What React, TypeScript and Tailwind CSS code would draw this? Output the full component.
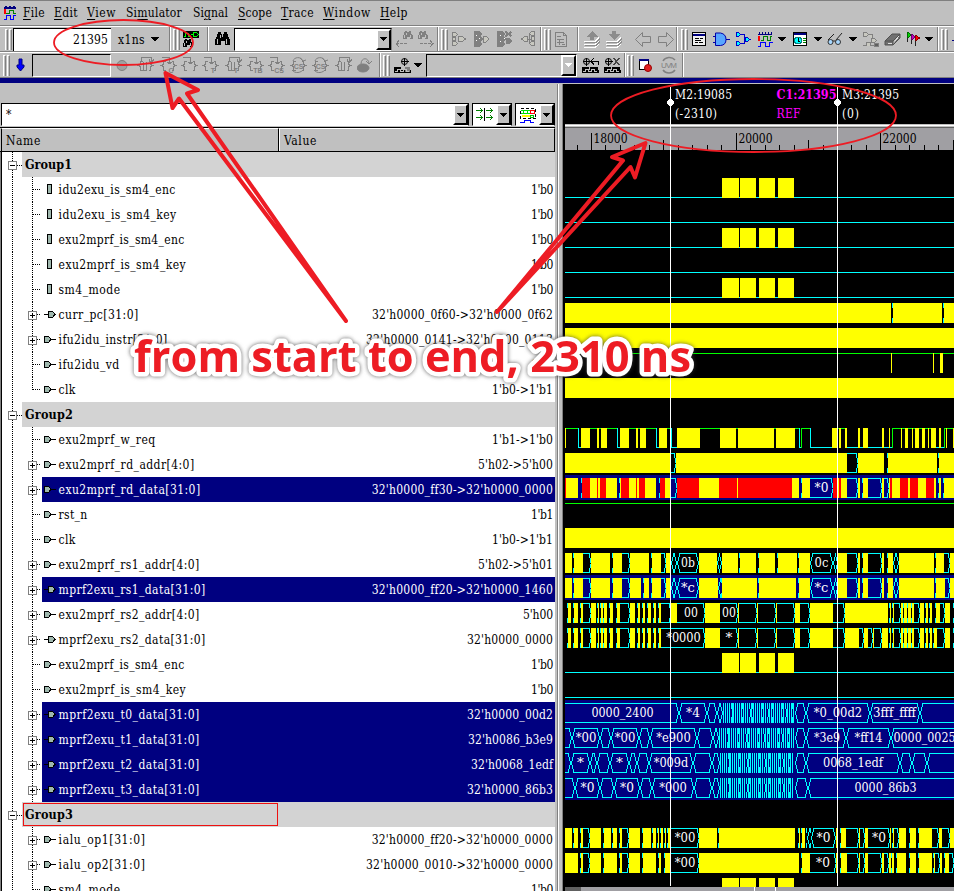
import { useLayoutEffect, useRef, type ReactNode } from "react";
import clsx from "clsx";

const SERIF = "font-['DejaVu_Serif_Condensed','DejaVu_Serif',serif]";

/* Text that spreads its letters so that it fills a fixed width. */
function Fit({ w, children, className }: { w: number; children: string; className?: string }) {
  const ref = useRef<HTMLSpanElement>(null);
  useLayoutEffect(() => {
    const el = ref.current;
    if (!el) return;
    el.style.letterSpacing = "0px";
    const natural = el.getBoundingClientRect().width;
    el.style.letterSpacing = `${(w - natural) / children.length}px`;
  }, [w, children]);
  return (
    <span ref={ref} className={clsx("inline-block whitespace-pre", className)}>
      {children}
    </span>
  );
}

/* ---------- menu bar ---------- */
const menus: [string, number, number, number][] = [
  ["File", 0, 22, 9],
  ["Edit", 0, 24, 9],
  ["View", 0, 29, 10],
  ["Simulator", 2, 56, 11],
  ["Signal", 2, 35, 10],
  ["Scope", 0, 34, 9],
  ["Trace", 0, 33, 9],
  ["Window", 0, 48, 9],
  ["Help", 0, 28, 0],
];

function MenuItem({ text, u, w, gap }: { text: string; u: number; w: number; gap: number }) {
  const ref = useRef<HTMLSpanElement>(null);
  useLayoutEffect(() => {
    const el = ref.current;
    if (!el) return;
    el.style.letterSpacing = "0px";
    el.style.letterSpacing = `${(w - el.getBoundingClientRect().width) / text.length}px`;
  }, [w, text]);
  return (
    <span ref={ref} className="inline-block whitespace-pre" style={{ marginRight: gap }}>
      {text.slice(0, u)}
      <span className="underline underline-offset-2">{text[u]}</span>
      {text.slice(u + 1)}
    </span>
  );
}

/* ---------- toolbar parts ---------- */
function Handle({ className }: { className: string }) {
  return (
    <div className={clsx("flex h-[21px] shrink-0 gap-px", className)}>
      <div className="w-[3px] border-l border-t border-white border-r border-r-[#808080]" />
      <div className="w-[3px] border-l border-t border-white border-r border-r-[#808080]" />
    </div>
  );
}
function Sep({ className }: { className?: string }) {
  return <div className={clsx("h-[25px] w-[2px] shrink-0 border-l border-r border-l-[#808080] border-r-white", className)} />;
}
function Tri({ className, fill = "#000" }: { className: string; fill?: string }) {
  return (
    <svg className={clsx("h-[6px] shrink-0", className)} width="8" height="6" viewBox="0 0 8 6" shapeRendering="crispEdges">
      <path d="M0 1h8L4 5.5z" fill={fill} />
    </svg>
  );
}
function Ic({ className, children, w = 17 }: { className: string; children: ReactNode; w?: number }) {
  return (
    <svg className={clsx("shrink-0", className)} width={w} height="18" viewBox={`0 0 ${w} 18`} fill="none" stroke="#808080" shapeRendering="crispEdges">
      {children}
    </svg>
  );
}
function DropButton({ fill }: { fill?: string }) {
  return (
    <div className="flex w-[15px] shrink-0 items-center justify-center border-2 border-b-black border-l-white border-r-black border-t-white bg-[#c0c0c0]">
      <Tri className="w-[7px]" fill={fill} />
    </div>
  );
}
function Binoculars({ x = 0, y = 0, s = 1, c = "#000" }: { x?: number; y?: number; s?: number; c?: string }) {
  return (
    <g transform={`translate(${x} ${y}) scale(${s})`} fill={c} stroke="none">
      <path d="M3 1h3v2h1v3h1V3h1V1h3v2h1v3h1v2h1v6h-5v-4H6v4H0V8h1V6h1V3h1z" />
      <path d="M2 8h1v5H2zM11 8h1v5h-1zM5 4h1v3H5z" fill="#c0c0c0" />
    </g>
  );
}

function Brace({ className, tag, kind = 0 }: { className: string; tag?: string; kind?: number }) {
  return (
    <Ic className={className}>
      <path d="M5.500 5.500h-2v3l-2 1 2 1v4h2M11.500 5.500h2v3l2 1-2 1v4h-2" />
      {kind === 0 && <path d="M4.500 5V1.500h10V6M12 3.500l2.500 3 2.500-3M6.500 6v8h3V6" />}
      {kind === 1 && <path d="M2 1.500h7.500V8M7 6.500h5M8 7.500h3" />}
      {kind === 2 && <path d="M3 5C4 1 11 0 13 5M10 2l3 3 3-1M2 14c3 4 9 3 12-1" shapeRendering="auto" />}
      {tag && (
        <text x={kind === 2 ? 8.5 : 11} y={kind === 2 ? 12.5 : 17} fontSize="7" fontWeight="bold" fill="#808080" stroke="none" textAnchor="middle" className="font-['Liberation_Sans',sans-serif]">
          {tag}
        </text>
      )}
    </Ic>
  );
}

function WaveIcon({ className }: { className: string }) {
  return (
    <Ic className={className} w={15}>
      <path d="M0 4.500h14M1.500 2v2M4.500 2v2M7.500 2v2M10.500 2v2M13.500 2v2" stroke="#000080" />
      <path d="M1 6v5" stroke="#f00" strokeWidth="2" />
      <path d="M3 10.500h2.500v-4h4v4h2.500v-4h2" stroke="#008000" />
      <path d="M0 16.500h2.500v-4h5v4h4v-4h3" stroke="#00f" />
    </Ic>
  );
}

function Gates({ className, c = "#808080", kind }: { className: string; c?: string; kind: number }) {
  return (
    <Ic className={className}>
      {kind === 0 && (
        <g stroke={c} fill="#c8c8c0">
          <path d="M1.500 2.500h3l2 2-2 2h-3zM1.500 11.500h3l2 2-2 2h-3zM7.500 6.500h4l3 2.500-3 2.500h-4z" />
          <path d="M1.500 7.500h3v3h-3z" />
        </g>
      )}
      {kind === 1 && (
        <g stroke="none" fill={c}>
          <path d="M0 1h5l3 3-1 3 2 2-2 2 1 3-3 3H0z" />
          <path d="M9 6h3l3 3-3 3H9z" fill="#c8c8c0" stroke={c} />
          <path d="M2 5h1v1H2zM2 10h1v1H2zM5 8h1v1H5z" fill="#fff" />
        </g>
      )}
      {kind === 2 && (
        <g stroke="none" fill={c}>
          <path d="M0 1h5l3 3-1 3 2 2-2 2 1 3-3 3H0z" />
          <path d="M9 8h3l3 3-3 3H9z" />
          <path d="M8.500 1.500l6 5M14.500 1.500l-6 5" stroke={c} strokeWidth="2" />
          <path d="M3 5h1v1H3zM3 11h1v1H3zM7 8h1v1H7z" fill="#fff" />
        </g>
      )}
      {kind === 3 && (
        <g stroke={c} fill="#c8c8c0">
          <path d="M7.500 6.500h-3l-3 2.500 3 2.500h3zM14.500 1.500h-3l-2 2 2 2h3zM14.500 6.500h-3v4h3zM14.500 11.500h-3l-2 2 2 2h3zM7 9h4M9 4v10" />
        </g>
      )}
    </Ic>
  );
}

function Layers({ className, up }: { className: string; up?: boolean }) {
  return (
    <Ic className={className}>
      <path d="M0 11.500h11l4-4M0 14.500h11l4-4M0 17.500h11l4-4" stroke="#fff" />
      <path d="M1 12.500h11l4-4M1 15.500h11l4-4" stroke="#909090" />
      <path d={up ? "M8 1l6 6h-4v3H6V7H2z" : "M8 10l6-6h-4V1H6v3H2z"} fill="#8c8c8c" stroke="none" />
    </Ic>
  );
}

function Probe({ className, kind }: { className: string; kind: number }) {
  return (
    <Ic className={className}>
      <circle cx={kind ? 4.5 : 10.5} cy="5.500" r="3" stroke="#000" shapeRendering="auto" />
      <path d={kind ? "M1 5.500h8M4.500 2v8" : "M7 5.500h8M10.500 2v8"} stroke="#000" />
      <path d="M0 11h7v3h10v3H0z" fill="#000" stroke="none" />
      {kind === 0 ? <path d="M11 11h5v5h-5z" fill="#808080" stroke="none" /> : <path d="M8 11h8v3H8z" fill="#000" stroke="none" />}
      <path d="M1 15.500h2v-2h3v2h3v-2h3v2h3" stroke="#c0c0c0" />
      {kind === 1 && <path d="M9 5.500h7v3M12 2l-3 3.500 3 3" stroke="#000" />}
      {kind === 2 && <path d="M9.500 2l6 7M15.500 2l-6 7" stroke="#444" strokeWidth="1.500" />}
    </Ic>
  );
}

/* ---------- signal list ---------- */
type Row = {
  n: string;
  w: number;
  v?: string;
  vw?: number;
  group?: boolean;
  plus?: boolean;
  icon?: "net" | "in" | "out";
  sel?: boolean;
  last?: boolean;
  focus?: boolean;
};

const rows: Row[] = [
  { n: "Group1", w: 47, group: true },
  { n: "idu2exu_is_sm4_enc", w: 117, v: "1'b0", vw: 22, icon: "net" },
  { n: "idu2exu_is_sm4_key", w: 118, v: "1'b0", vw: 22, icon: "net" },
  { n: "exu2mprf_is_sm4_enc", w: 126, v: "1'b0", vw: 22, icon: "net" },
  { n: "exu2mprf_is_sm4_key", w: 127.5, v: "1'b0", vw: 22, icon: "net" },
  { n: "sm4_mode", w: 62, v: "1'b0", vw: 22, icon: "net" },
  { n: "curr_pc[31:0]", w: 80, v: "32'h0000_0f60->32'h0000_0f62", vw: 181, icon: "out", plus: true },
  { n: "ifu2idu_instr[31:0]", w: 109, v: "32'h0000_0141->32'h0300_0113", vw: 187, icon: "in", plus: true },
  { n: "ifu2idu_vd", w: 61, v: "1'b1", vw: 22, icon: "in" },
  { n: "clk", w: 17, v: "1'b0->1'b1", vw: 61, icon: "in", last: true },
  { n: "Group2", w: 48, group: true },
  { n: "exu2mprf_w_req", w: 97, v: "1'b1->1'b0", vw: 61, icon: "in" },
  { n: "exu2mprf_rd_addr[4:0]", w: 136, v: "5'h02->5'h00", vw: 75, icon: "in", plus: true },
  { n: "exu2mprf_rd_data[31:0]", w: 142, v: "32'h0000_ff30->32'h0000_0000", vw: 181, icon: "in", plus: true, sel: true },
  { n: "rst_n", w: 29, v: "1'b1", vw: 22, icon: "in" },
  { n: "clk", w: 17, v: "1'b0->1'b1", vw: 61, icon: "in" },
  { n: "exu2mprf_rs1_addr[4:0]", w: 141, v: "5'h02->5'h01", vw: 75, icon: "in", plus: true },
  { n: "mprf2exu_rs1_data[31:0]", w: 147, v: "32'h0000_ff20->32'h0000_1460", vw: 181, icon: "out", plus: true, sel: true },
  { n: "exu2mprf_rs2_addr[4:0]", w: 141, v: "5'h00", vw: 30, icon: "in", plus: true },
  { n: "mprf2exu_rs2_data[31:0]", w: 147, v: "32'h0000_0000", vw: 86, icon: "out", plus: true },
  { n: "exu2mprf_is_sm4_enc", w: 126, v: "1'b0", vw: 22, icon: "in" },
  { n: "exu2mprf_is_sm4_key", w: 127.5, v: "1'b0", vw: 22, icon: "in" },
  { n: "mprf2exu_t0_data[31:0]", w: 141, v: "32'h0000_00d2", vw: 86, icon: "out", plus: true, sel: true },
  { n: "mprf2exu_t1_data[31:0]", w: 141, v: "32'h0086_b3e9", vw: 85, icon: "out", plus: true, sel: true },
  { n: "mprf2exu_t2_data[31:0]", w: 141, v: "32'h0068_1edf", vw: 82, icon: "out", plus: true, sel: true },
  { n: "mprf2exu_t3_data[31:0]", w: 141, v: "32'h0000_86b3", vw: 86, icon: "out", plus: true, sel: true },
  { n: "Group3", w: 48, group: true, focus: true },
  { n: "ialu_op1[31:0]", w: 87, v: "32'h0000_ff20->32'h0000_0000", vw: 181, icon: "in", plus: true },
  { n: "ialu_op2[31:0]", w: 87, v: "32'h0000_0010->32'h0000_0000", vw: 187, icon: "in", plus: true },
  { n: "sm4_mode", w: 62, v: "1'b0", vw: 22, icon: "in" },
];

function Tree({ row }: { row: Row }) {
  if (row.group)
    return (
      <svg width="20" height="25" viewBox="0 0 20 25" className="shrink-0" shapeRendering="crispEdges" fill="none" stroke="#000">
        <path d="M10.500 0v25M15 13.500h5" strokeDasharray="1 1" />
        <rect x="6.500" y="9.500" width="8" height="8" fill="#fff" stroke="#808080" />
        <path d="M8 13.500h5" />
      </svg>
    );
  return (
    <svg width="40" height="25" viewBox="0 0 40 25" className="shrink-0" shapeRendering="crispEdges" fill="none" stroke="#000">
      <path d={row.last ? "M10.500 0v25M30.500 0v13" : "M10.500 0v25M30.500 0v25"} strokeDasharray="1 1" />
      <path d="M31 12.500h8" strokeDasharray="1 1" />
      {row.plus && (
        <>
          <rect x="26.500" y="9.500" width="8" height="8" fill="#fff" stroke="#808080" />
          <path d="M28 13.500h5M30.500 11v5" />
        </>
      )}
    </svg>
  );
}

function Port({ kind }: { kind?: string }) {
  return (
    <svg width="16" height="25" viewBox="0 0 16 25" className="shrink-0" shapeRendering="crispEdges" fill="#9fb8ae" stroke="#000">
      {kind === "net" && <rect x="5.500" y="7.500" width="4" height="9" />}
      {kind === "in" && <path d="M2.500 9.500h4l2.500 3-2.500 3h-4zM9 12.500h5" />}
      {kind === "out" && <path d="M6.500 9.500h4l2.500 3-2.500 3h-4zM2 12.500h4" />}
    </svg>
  );
}

function SignalRow({ row }: { row: Row }) {
  return (
    <div className="flex h-[25px] shrink-0 leading-[27px]">
      <Tree row={row} />
      {row.group ? (
        <div className="flex min-w-0 flex-1 bg-[#d3d3d3] font-bold">
          <div className={clsx("mt-px flex h-[23px] w-[255px] border pl-px leading-[22px] ml-px", row.focus ? "border-[#ee1111]" : "border-transparent")}>
            <Fit w={row.w} className="text-[12.5px]">{row.n}</Fit>
          </div>
        </div>
      ) : (
        <div className={clsx("flex min-w-0 flex-1", row.sel && "bg-[#000080] text-white")}>
          <Port kind={row.icon} />
          <Fit w={row.w} className="ml-[0.6px]">{row.n}</Fit>
          <span className="flex-1" />
          <span className="pr-[2px]">
            <Fit w={row.vw ?? 22}>{row.v ?? ""}</Fit>
          </span>
        </div>
      )}
    </div>
  );
}

/* ---------- waveforms ----------
   Each token is a kind, a start (in thirds of a pixel from x = 560) and an
   optional label: y/r busy fill, b bus closed on the right, o bus closed on
   both sides, h high, l low, d dense transitions. */
const BLOCKS = "l15 y486 l537 y540 l588 y597 l645 y654 l702";
const waves: Record<number, string> = {
  1: BLOCKS,
  2: "l15",
  3: BLOCKS,
  4: "l15",
  5: BLOCKS,
  6: "y15 b993 y999 b1146 y1152",
  7: "y15",
  8: "h15 y993 h996 y1119 h1122 y1140 h1149",
  9: "y15",
  11: "y15 h18 l54 y63 h90 y111 h117 y123 h141 l171 y180 h207 y228 h234 y240 h258 l288 y297 h321 l333 y351 h420 y480 h528 y534 h642 y648 h705 l717 h723 l750 y816 h834 y837 h843 y855 l861 y894 l900 y909 l924 y966 l972 y987 l990 h996 y1023 h1026 y1035 h1044 y1056 h1059 y1065 h1077 y1086 h1095 y1104 h1107 y1113 l1128 y1137 l1143 h1152 y1158 h1161 y1179",
  12: "y15 b333 y348 b861 y894 b972 y984 b1131 y1137",
  13: "r15 y18 b54 r66 y90 r111 y114 r120 y138 b171 y180 r183 y207 r228 y231 r237 y255 b288 r300 y315 b333 r351 y417 r477 y531 r534 y696 b717 y726 b750:*0 r819 y834 r837 y843 b861 y894 b900 y909 b924 y966 b972 y987 r990 y996 r1020 y1044 r1050 y1074 r1098 y1122 b1128 y1137 b1143 y1152",
  14: "h15",
  15: "y15",
  16: "y15 b36 y42 b69 y93 b150 y159 b186 y210 b267 y276 b303 y318 o333 o351:0b y417 o472 y486 b534 y540 b588 y597 b645 y654 b711 y717 o750:0c o818 y834 b861 y894 b900 y909 b924 y966 b972 y984 o1000 y1017 b1122 y1128 b1152 y1170",
  17: "y15 b36 y42 b69 y93 b150 y159 b186 y210 b243 y252 b267 y276 b303 y318 o333 o351:*c y417 o474 y486 b591 y597 b708 y717 o750:*c o818 y834 b861 y894 b900 y909 b924 y966 b972 y984 o1000 y1017 b1122 y1128 b1155 y1170",
  18: "b15 y24 b33 y42 b54 y63 b69 y93 b108 y114 b117 y123 b129 y132 b141 y150 b159 y171 b180 y210 b225 y234 b240 y249 b255 y264 b273 y282 b288 y297 b303 y333 b351:00 y435 b480:00 y534 b537 y591 b594 y648 b651 y705 b720 y750 b819 y855 b984 y990 b993 y999 b1002 y1023 b1029 y1032 b1041 y1044 b1053 y1056 b1062 y1080 b1092 y1098 b1104 y1110 b1116 y1128 b1140 y1155 b1170",
  19: "b15 y24 b33 y42 b54 y63 b69 y93 b108 y114 b117 y123 b129 y132 b141 y150 b159 y171 b180 y210 b225 y234 b240 y249 b255 y264 b273 y282 b288 y297 b303:*0000 y435 b480:* y534 b537 y591 b594 y648 b651 y705 b720 y750 b819 y855 b897 y912 b924 y939 b942 y966 b984 y990 b993 y999 b1002 y1023 b1029 y1032 b1041 y1044 b1053 y1056 b1062 y1080 b1092 y1098 b1104 y1110 b1116 y1122 b1131 y1155 b1170",
  20: BLOCKS,
  21: "l15",
  22: "b15:0000_2400 o357:*4 o441 o472 d489 o705 o738:*0_00d2 o930:3fff_ffff o1080",
  23: "b15 o36:*00 o120 o153:*00 o237 o270:*e900 o411 o459 d477 o705 o738:*3e9 o858:*ff14 o993:0000_0025",
  24: "b15 o33:* o90 o111 o150:* o207 o231 o267:*009d o399 o456 d480 o705 o738:0068_1edf o1020 o1056 o1101",
  25: "b15 o45:*0 o120 o162:*0 o240 o276:*000 o402 o456 d480 o705 o744:0000_86b3",
  27: "y15 b36 y42 b54 y63 b69 y90 b123 y132 b153 y159 b171 y180 b186 y207 b240 y249 b273 y279 b288 y294 b297 y303 b309 y315 b318 y324 b333:*00 y417 b471 y477 b705 y717 b720 y726 b735 o741 o753:*0 y828 b834 y843 b858 y897 b900 y915 b924:*0 y990 b993 y999 b1002 y1017 b1038 y1050 b1068 y1077 b1116 y1137 b1146 y1170",
  28: "y15 b54 y63 b69 y90 b123 y132 b171 y180 b186 y207 b240 y249 b288 y297 b303 y315 b333:*00 y417 b717 y726 b750:*0 y828 b834 y843 b861 y897 b900 y915 b924 y966 b972 y987 b993 y996 b1002 y1011 b1038 y1050 b1068 y1077 b1116 y1122 b1125 y1140 b1146 y1155 b1167",
  29: BLOCKS,
};

const labelX: Record<string, number> = {
  "0000_2400": 622.5, "3fff_ffff": 894.5, "0000_0025": 924.5, "*3e9": 827, "*0000": 683.5,
  "0000_86b3": 885.5, "0068_1edf": 853,
};
const labelW: Record<string, number> = { "3fff_ffff": 43, "*ff14": 28, "*3e9": 26, "0068_1edf": 60 };

function Trace({ index, spec }: { index: number; spec: string }) {
  const top = 150 + index * 25;
  const t = top + 3;
  const b = t + 19;
  const selected = rows[index].sel;
  const bg = selected ? "#000080" : "#000";
  const tokens = spec.split(" ").map((s) => {
    const [head, label] = s.split(":");
    return { kind: head[0], x: 560 + Math.round(Number(head.slice(1)) / 3), label };
  });
  const cyan = "#00ffff";
  const isLong = index >= 22 && index <= 25;
  return (
    <g>
      {selected && <rect x="565" y={top} width="389" height="25" fill={bg} />}
      {tokens.map((k, i) => {
        const x = k.x;
        const e = i + 1 < tokens.length ? tokens[i + 1].x : isLong ? 970 : 954;
        const w = e - x;
        const prev = tokens[i - 1]?.kind;
        const next = tokens[i + 1]?.kind;
        switch (k.kind) {
          case "y":
          case "r":
            return <rect key={i} x={x} y={t} width={w} height="20" fill={k.kind === "y" ? "#ffff00" : "#ff0000"} />;
          case "h":
            return (
              <g key={i} fill="#00ff00">
                <rect x={x} y={t} width={w} height="1" />
                {prev === "l" && <rect x={x} y={t} width="1" height="20" />}
              </g>
            );
          case "l":
            return (
              <g key={i} fill={cyan}>
                <rect x={x} y={b} width={w} height="1" />
                {prev === "h" && <rect x={x} y={t} width="1" height="20" />}
              </g>
            );
          case "d":
            return (
              <g key={i} fill={cyan}>
                {Array.from({ length: Math.floor(w / 2) }, (_, j) => (
                  <g key={j}>
                    <rect x={x + j * 2} y={t} width={j % 5 === 4 ? 2 : 1} height="6" />
                    <rect x={x + j * 2 + (j % 9 === 4 ? 1 : 0)} y={t + 6} width="1" height="8" />
                    <rect x={x + j * 2} y={t + 14} width={j % 5 === 4 ? 2 : 1} height="6" />
                  </g>
                ))}
              </g>
            );
          case "b":
          case "o": {
            const l = k.kind === "o" ? 2 : 0;
            const wide = w > 4;
            const sloped = next === "o" || next === "d" || l > 0;
            return (
              <g key={i} fill={cyan}>
                <rect x={x} y={t} width={w} height="20" fill={bg} />
                {!wide && (
                  <>
                    <rect x={e - 1} y={t} width="1" height="5" />
                    <rect x={e - 1} y={t + 15} width="1" height="5" />
                  </>
                )}
                {wide && (
                  <>
                    <rect x={x + l} y={t} width={w - l - 2} height="1" />
                    <rect x={x + l} y={b} width={w - l - 2} height="1" />
                  </>
                )}
                {wide && sloped && (
                  <>
                    <rect x={e - 3} y={t} width="1" height="4" />
                    <rect x={e - 2} y={t + 4} width="1" height="4" />
                    <rect x={e - 1} y={t + 8} width="1" height="4" />
                    <rect x={e - 2} y={t + 12} width="1" height="4" />
                    <rect x={e - 3} y={t + 16} width="1" height="4" />
                  </>
                )}
                {wide && !sloped && (
                  <>
                    <rect x={e - 2} y={t} width="1" height="5" />
                    <rect x={e - 1} y={t + 5} width="1" height="5" />
                    <rect x={e - 1} y={t + 11} width="1" height="4" />
                    <rect x={e - 2} y={t + 15} width="1" height="5" />
                  </>
                )}
                {l > 0 && (
                  <>
                    <rect x={x + 2} y={t} width="1" height="4" />
                    <rect x={x + 1} y={t + 4} width="1" height="4" />
                    <rect x={x} y={t + 8} width="1" height="4" />
                    <rect x={x + 1} y={t + 12} width="1" height="4" />
                    <rect x={x + 2} y={t + 16} width="1" height="4" />
                  </>
                )}
              </g>
            );
          }
          default:
            return null;
        }
      })}
      {tokens.map((k, i) => {
        if (!k.label) return null;
        const e = i + 1 < tokens.length ? tokens[i + 1].x : 954;
        return (
          <text
            key={`t${i}`}
            x={labelX[k.label] ?? (k.x + e) / 2}
            y={top + 17}
            textAnchor="middle"
            textLength={labelW[k.label] ?? k.label.length * 6.9}
            lengthAdjust="spacingAndGlyphs"
            fill="#fff"
          >
            {k.label}
          </text>
        );
      })}
    </g>
  );
}

function WaveView() {
  const ticks = Array.from({ length: 28 }, (_, i) => i - 1);
  return (
    <svg width="389" height="807" viewBox="565 84 389 807" className={clsx("shrink-0 text-[12px]", SERIF)} shapeRendering="crispEdges">
      <rect x="565" y="84" width="389" height="807" fill="#000" />
      <rect x="565" y="124" width="389" height="1" fill="#c0c0c0" />
      <rect x="565" y="125" width="389" height="1" fill="#fff" />
      <rect x="565" y="126" width="389" height="1" fill="#c0c0c0" />
      <rect x="565" y="127" width="389" height="1" fill="#606060" />
      <rect x="565" y="128" width="389" height="22" fill="#a09fa3" />
      {ticks.map((i) => {
        const x = Math.round(591 + i * 14.47);
        const top = i % 10 === 0 ? 133 : i % 5 === 0 ? 140 : 145;
        return x < 954 ? <rect key={i} x={x} y={top} width="1" height={150 - top} fill="#000" /> : null;
      })}
      {([["18000", 593.5], ["20000", 738.5], ["22000", 882.5]] as [string, number][]).map(([s, x]) => (
        <text key={s} x={x} y="143" textLength="34" fill="#000">{s}</text>
      ))}
      {Object.entries(waves).map(([k, spec]) => (
        <Trace key={k} index={Number(k)} spec={spec} />
      ))}
      <rect x="565" y="887" width="389" height="4" fill="#a09fa3" />
      <rect x="565" y="887" width="16" height="4" fill="#606060" />
      <rect x="754" y="887" width="1" height="4" fill="#fff" />
      <rect x="775" y="887" width="1" height="4" fill="#fff" />
      {[670, 837].map((x) => (
        <g key={x} fill="#fff">
          <rect x={x} y="87" width="1" height="799" />
          <path d={`M${x - 1} 99h3v1h1v1h1v3h-1v1h-1v1h-3v-1h-1v-1h-1v-3h1v-1h1z`} />
        </g>
      ))}
      <g fill="#fff">
        <text x="675" y="99" textLength="57">M2:19085</text>
        <text x="675" y="118" textLength="42">(-2310)</text>
        <text x="842" y="99" textLength="57">M3:21395</text>
        <text x="842" y="118" textLength="17">(0)</text>
      </g>
      <g fill="#ff00ff">
        <text x="776.5" y="99" textLength="60" lengthAdjust="spacingAndGlyphs" fontWeight="bold">C1:21395</text>
        <text x="776.5" y="118" textLength="24">REF</text>
      </g>
    </svg>
  );
}

/* ---------- red notes over the window ---------- */
function Notes() {
  return (
    <svg className="pointer-events-none absolute left-0 top-0" width="954" height="891" viewBox="0 0 954 891" fill="none" stroke="#ed1c24">
      <ellipse cx="123.500" cy="42.500" rx="69.500" ry="22.500" strokeWidth="1.800" />
      <ellipse cx="753.500" cy="115.500" rx="142.500" ry="36.500" strokeWidth="1.800" />
      <path d="M346 321L179 98.500L172.500 108L165.500 73L198 90L187 93.500Z" strokeWidth="4" strokeLinejoin="round" />
      <path d="M497 312L623 160.500L612 157L645.500 143L635 177.500L630.500 167Z" strokeWidth="4" strokeLinejoin="round" />
      <g className="font-['Open_Sans','Noto_Sans',sans-serif] text-[43px] font-bold drop-shadow-[0_0_2px_rgba(60,60,60,0.8)]">
        <text x="134" y="372" textLength="557" lengthAdjust="spacingAndGlyphs" fill="#ed1c24" stroke="#fff" strokeWidth="9" strokeLinejoin="round" paintOrder="stroke">
          from start to end, 2310 ns
        </text>
      </g>
    </svg>
  );
}

function TopBar() {
  return (
    <div className="flex h-[26px] items-center border-b border-t border-[#808080] pl-[4px] leading-[26px]">
      <svg width="19" height="16" viewBox="0 0 19 16" className="shrink-0" fill="none" shapeRendering="crispEdges">
        <path d="M0 3h12M1.500 1v1M5.500 1v1M9.500 1v1" stroke="#000080" strokeWidth="2" />
        <path d="M1 4v5" stroke="#f00" strokeWidth="2" />
        <path d="M2 8.500h3v-3h4v3h3" stroke="#008000" strokeWidth="1" />
        <path d="M0 14.500h2v-4h4v4h3v-4h3" stroke="#0000ff" />
      </svg>
      {menus.map(([t, u, w, g]) => (
        <MenuItem key={t} text={t} u={u} w={w} gap={g} />
      ))}
    </div>
  );
}

function ToolbarOne() {
  return (
    <div className="flex h-[26px] items-center overflow-hidden border-b border-t border-b-[#808080] border-t-white pl-[5px]">
      <Handle className="mr-px w-[7px]" />
      <div className="h-[23px] w-[98px] shrink-0 border-l border-t border-black border-b-white border-r-white bg-white pr-[3px] text-right leading-[23px]">
        <Fit w={35}>21395</Fit>
      </div>
      <span className="ml-[7px] w-[33px] shrink-0 pt-px"><Fit w={27}>x1ns</Fit></span>
      <Tri className="mr-[10px] w-[8px]" />
      <Sep className="mr-[2px]" />
      <Handle className="mr-[3px] w-[7px]" />
      <Ic className="mr-[7px] w-[17px]">
        <rect x="0" y="1" width="16" height="7" fill="#000" stroke="none" />
        <path d="M1 6.500h1.500v-3h3v3h2M8 4.500h2M10.500 2.500h3l2 2-2 2h-3z" stroke="#00ff00" />
        <Binoculars x={0} y={8} s={0.65} />
      </Ic>
      <Sep className="mr-[6px]" />
      <Ic className="mr-[2px] w-[17px]"><Binoculars y={1} /></Ic>
      <div className="flex h-[23px] w-[158px] shrink-0 justify-end border border-b-white border-l-black border-r-[#808080] border-t-black bg-white">
        <DropButton />
      </div>
      <Ic className="ml-[4px] w-[17px]"><Binoculars x={7} y={0} s={0.65} c="#808080" /><path d="M0 13.500h12M3 10.500l-3 3 3 3" strokeDasharray="3 1" /></Ic>
      <Ic className="ml-[4px] mr-[3px] w-[17px]"><Binoculars x={1} y={0} s={0.65} c="#808080" /><path d="M3 13.500h12M13 10.500l3 3-3 3" strokeDasharray="3 1" /></Ic>
      <Sep className="mr-[2px]" />
      <Handle className="mr-[3px] w-[7px]" />
      <Gates className="mr-[6px]" kind={0} />
      <Gates className="mr-[6px]" kind={1} />
      <Gates className="mr-[6px]" kind={2} />
      <Gates className="mr-[3px]" kind={3} />
      <Sep className="mr-[2px]" />
      <Handle className="mr-[4px] w-[7px]" />
      <Ic className="mr-[5px] w-[17px]"><path d="M.5 2.500h8l3 3v11H.5zM8.500 2.500v3h3M2 6.500h4M2 9.500h7M2 12.500h7M7 14.500h3M4 9v6" /></Ic>
      <Sep className="mr-[5px]" />
      <Layers className="mr-[5px]" up />
      <Layers className="mr-[12px]" />
      <Ic className="mr-[6px] w-[17px]"><path d="M7.500 2.500v4h8v6h-8v4l-7-7z" shapeRendering="auto" /></Ic>
      <Ic className="mr-px w-[17px]"><path d="M8.500 2.500v4h-8v6h8v4l7-7z" shapeRendering="auto" /></Ic>
      <Sep className="mr-[3px]" />
      <Handle className="mr-[4px] w-[7px]" />
      <Ic className="mr-[4px] w-[17px]"><rect x=".5" y="2.500" width="13" height="13" fill="#f0f0f0" stroke="#000" /><path d="M1 4.500h12" stroke="#000080" strokeWidth="2" /><path d="M3 8.500h4M8 8.500h3M3 10.500h6M3 12.500h3M7 12.500h4" stroke="#000" /></Ic>
      <Ic className="mr-[5px] w-[17px]"><path d="M2.500 3h5q5.500 1 5.500 6.500t-5.500 6h-5z" fill="#58a6ff" stroke="#0000aa" shapeRendering="auto" /><path d="M0 6.500h2M0 12.500h2M13 9.500h4" stroke="#0000aa" /></Ic>
      <Ic className="mr-[6px] w-[17px]"><path d="M3 4.500h6v9H3M9 9.500h7" stroke="#0000cc" /><path d="M1.500 2.500h2l2 2-2 2h-2zM1.500 11.500h2l2 2-2 2h-2zM10.500 7.500h2l2 2-2 2h-2z" fill="#00ffff" stroke="#0000cc" /></Ic>
      <WaveIcon className="mr-[5px]" />
      <Tri className="mr-[7px] w-[8px]" />
      <Ic className="mr-[4px] w-[17px]"><rect x=".5" y="2.500" width="13" height="13" fill="#fff" stroke="#000" /><path d="M1 4h12" stroke="#000080" strokeWidth="2" /><circle cx="5" cy="10.500" r="3.500" fill="#00ffff" stroke="#008080" /><path d="M5 8v3h2" stroke="#000" /><path d="M10 8.500h3M10 10.500h3M10 12.500h3" stroke="#008000" /></Ic>
      <Tri className="mr-[5px] w-[8px]" />
      <Ic className="mr-[5px] w-[17px]"><path d="M1 10L7 4M9 10l6-7M6 11h3" stroke="#222" shapeRendering="auto" /><circle cx="3.500" cy="12" r="2.500" fill="#a8d8ff" stroke="#333" shapeRendering="auto" /><circle cx="11" cy="12" r="2.500" fill="#a8d8ff" stroke="#333" shapeRendering="auto" /></Ic>
      <Tri className="mr-[5px] w-[8px]" />
      <Ic className="mr-[5px] w-[17px]"><path d="M1.500 2.500h3l2 2-2 2h-3zM6 4.500h4v4M9.500 8.500h3l2 2-2 2h-3zM1 15.500h3v-3h4v3h4" fill="#c8c8c0" /><path d="M12 13h4v3h-4z" fill="#606060" /></Ic>
      <Ic className="mr-[5px] w-[17px]"><path d="M1 11L8 4h8l-7 7zM1 11v4h8v-4M9 15l7-7V4" fill="#707070" stroke="#505050" shapeRendering="auto" /><path d="M4 13h4M11 11l4-5" stroke="#ddd" /></Ic>
      <Ic className="mr-[4px] w-[15px]" w={15}><path d="M1.500 2v10M5.500 4v10M9.500 6v10" stroke="#222" /><path d="M1 2l5 3-5 3z" fill="#00d000" stroke="#060" /><path d="M5 4l5 3-5 3z" fill="#c000c0" stroke="#606" /><path d="M9 5l5 3-5 3z" fill="#ff0000" stroke="#800" /></Ic>
      <Tri className="mr-[4px] w-[8px]" />
      <Sep className="mr-[2px]" />
      <Handle className="mr-[4px] w-[7px]" />
      <div className="mt-[3px] h-px w-[5px] bg-[#000080]" />
    </div>
  );
}

function ToolbarTwo() {
  return (
    <div className="flex h-[26px] items-center overflow-hidden border-b border-t border-b-[#808080] border-t-white pl-[3px]">
      <Handle className="mr-[5px] w-[7px]" />
      <Ic className="mr-[7px] w-[10px]" w={10}><path d="M4 3h3v6h2v2L5.500 15 2 11V9h2z" fill="#0000ff" stroke="#000080" shapeRendering="auto" /></Ic>
      <div className="mr-[5px] h-[23px] w-[79px] shrink-0 border border-b-white border-l-black border-r-white border-t-black" />
      <Ic className="mr-[8px] w-[13px]" w={13}><circle cx="6" cy="9.500" r="5" fill="#a0a0a0" shapeRendering="auto" /></Ic>
      <Brace className="mr-[6px]" />
      <Brace className="mr-[4px]" tag="C" kind={1} />
      <Brace className="mr-[4px]" kind={1} />
      <Brace className="mr-[6px]" tag="T" kind={1} />
      <Brace className="mr-[5px]" tag="T" />
      <Brace className="mr-[4px]" tag="TB" kind={1} />
      <Brace className="mr-[5px]" tag="CS" kind={1} />
      <Brace className="mr-[5px]" tag="CS" kind={2} />
      <Brace className="mr-[6px]" tag="CS" kind={2} />
      <Brace className="mr-[5px]" />
      <Ic className="mr-[5px] w-[17px]"><ellipse cx="6" cy="12" rx="6" ry="4" fill="#808080" shapeRendering="auto" /><path d="M4 8c0-7 8-7 8 0M9 5l3 3 3-3" shapeRendering="auto" /></Ic>
      <Sep className="mr-[2px]" />
      <Handle className="mr-[4px] w-[7px]" />
      <Probe className="mr-[3px]" kind={0} />
      <Tri className="mr-[4px] w-[8px]" />
      <div className="mr-[5px] flex h-[23px] w-[151px] shrink-0 justify-end border border-b-white border-l-black border-r-white border-t-black">
        <DropButton fill="#fff" />
      </div>
      <Probe className="mr-[5px]" kind={1} />
      <Probe className="mr-[3px]" kind={2} />
      <Sep className="mr-px" />
      <Handle className="mr-[5px] w-[7px]" />
      <Ic className="mr-[5px] w-[17px]"><rect x=".5" y="3.500" width="9" height="10" fill="#fff" stroke="#000" /><path d="M0 4h10" stroke="#000080" strokeWidth="2" /><circle cx="9" cy="12" r="3.500" fill="#e02020" stroke="#900" shapeRendering="auto" /></Ic>
      <Ic className="mr-[4px] w-[17px]">
        <path d="M2 5a7 6 0 0 1 12-1M14 14a7 6 0 0 1-12 0" strokeWidth="1.500" shapeRendering="auto" />
        <text x="8" y="12" fontSize="8" textAnchor="middle" textLength="16" fill="#808080" stroke="none" className="font-['Liberation_Sans',sans-serif]">UVM</text>
      </Ic>
      <Sep />
    </div>
  );
}

function FilterBar() {
  const box = "flex h-[23px] shrink-0 border border-l-black border-t-black border-b-white border-r-black bg-white";
  return (
    <div className="flex h-[23px] shrink-0 pl-px">
      <div className={clsx(box, "mr-[3px] w-[468px] justify-between pl-[4px] leading-[23px]")}>
        <span>*</span>
        <DropButton />
      </div>
      <div className={clsx(box, "mr-[3px] w-[40px] items-stretch justify-between pl-[2px]")}>
        <Ic className="mt-px" w={20}>
          <path d="M1 5.500h6M5 3l2 2.500L5 8M1 12.500h6M5 10l2 2.500L5 15M11 5.500h6M15 3l2 2.500L15 8M11 12.500h6M15 10l2 2.500L15 15" stroke="#008000" />
          <path d="M9.500 3v13" stroke="#000" />
        </Ic>
        <DropButton />
      </div>
      <div className={clsx(box, "w-[40px] items-stretch justify-between pl-[3px]")}>
        <Ic className="mt-px" w={18}>
          <rect x="1.500" y="3.500" width="15" height="10" stroke="#000" strokeDasharray="3 2" />
          <path d="M2 5.500h9M2 8.500h9M4.500 5v4M8.500 5v4" stroke="#00e000" />
          <rect x="11.500" y="5.500" width="4" height="3" stroke="#f00" />
          <path d="M3 11h8" stroke="#ffff00" strokeWidth="2" />
          <rect x="11.500" y="10.500" width="3" height="2" stroke="#00c000" />
          <path d="M1 17.500h4v-2h6v2h4" stroke="#00f" />
        </Ic>
        <DropButton />
      </div>
    </div>
  );
}

export default function App() {
  return (
    <div className={clsx("relative flex h-[891px] w-[954px] flex-col overflow-hidden bg-[#c0c0c0] text-[12px] text-black", SERIF)}>
      <TopBar />
      <ToolbarOne />
      <ToolbarTwo />
      <div className="h-[5px] shrink-0 bg-[#000080]" />
      <div className="flex h-[808px]">
        <div className="flex w-[555px] flex-col pt-[20px]">
          <FilterBar />
          <div className="mt-px flex h-[25px] shrink-0 border-b border-t border-black pl-px leading-[25px]">
            <div className="w-[278px] border-l border-r border-t border-black border-l-black border-t-white pl-[4px]"><Fit w={35}>Name</Fit></div>
            <div className="flex-1 border-l border-r border-t border-l-white border-r-black border-t-white pl-[4px]"><Fit w={33}>Value</Fit></div>
          </div>
          <div className="flex min-h-0 flex-1 flex-col overflow-hidden border-l border-[#808080]">
            <div className="flex flex-col border-l border-black bg-white">
              {rows.map((r, i) => (
                <SignalRow key={i} row={r} />
              ))}
            </div>
          </div>
        </div>
        <div className="flex w-[10px] pt-px">
          <div className="ml-[2px] w-px bg-[#808080]" />
          <div className="w-px bg-white" />
          <div className="w-[3px] bg-[#c0c0c0]" />
          <div className="w-px bg-[#808080]" />
          <div className="flex-1 bg-black" />
        </div>
        <div className="pt-px">
          <WaveView />
        </div>
      </div>
      <Notes />
    </div>
  );
}
